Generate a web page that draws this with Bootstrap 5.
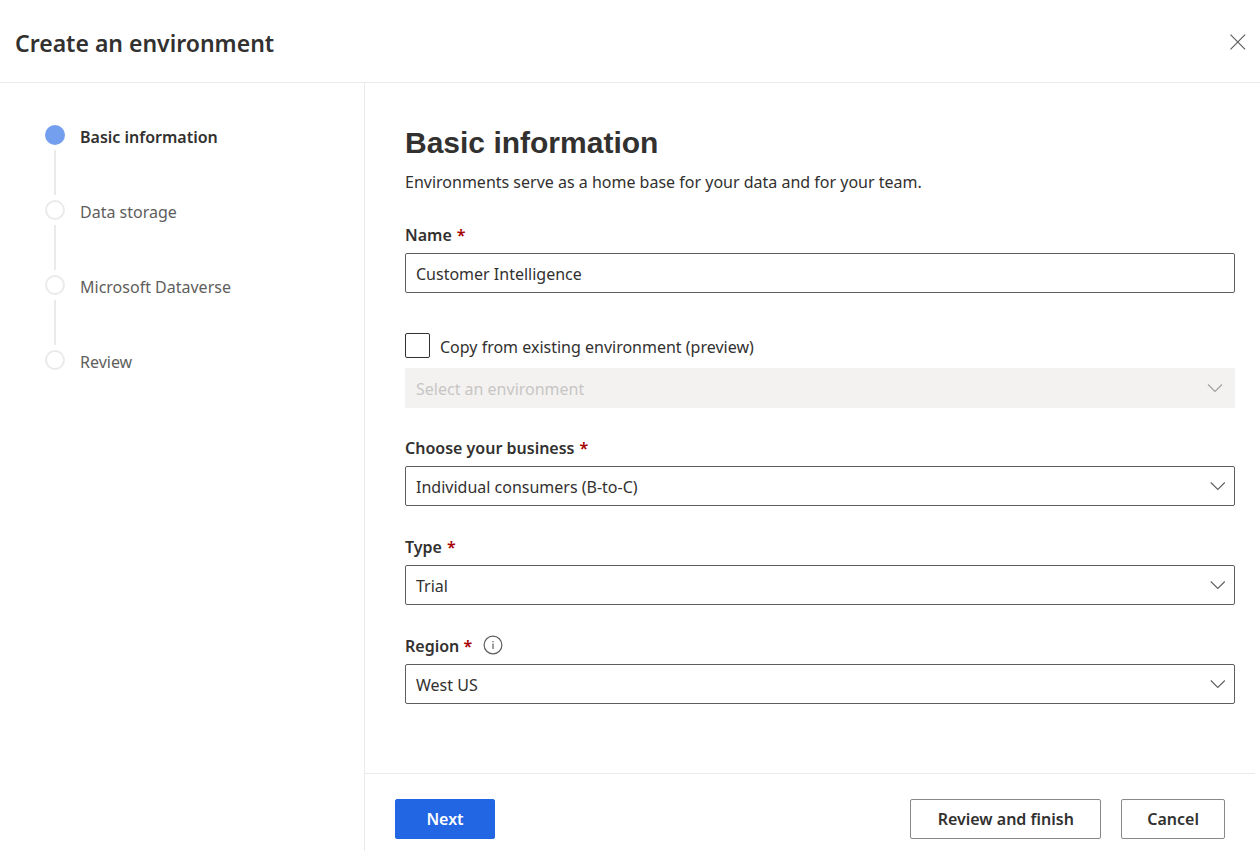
<!DOCTYPE html>
<html lang="en">
<head>
<meta charset="utf-8">
<meta name="viewport" content="width=device-width, initial-scale=1">
<title>Create an environment</title>
<link href="https://cdn.jsdelivr.net/npm/bootstrap@5.3.0/dist/css/bootstrap.min.css" rel="stylesheet">
<style>
  body { font-family: "Noto Sans", "Open Sans", sans-serif; font-size: 16px; line-height: 24px; color: #323130; background: #fff; }
  .panel-header { height: 83px; padding: 2px 14px 0 15px; border-bottom: 1px solid #eaeaea; }
  .panel-title { font-size: 23px; line-height: 32px; font-weight: 600; padding-top: 2px; }
  .close-btn { width: 16px; height: 16px; line-height: 0; }
  .steps-pane { flex: 0 0 365px; border-right: 1px solid #eaeaea; padding: 42px 20px 0 45px; }
  .step { height: 75px; gap: 15px; color: #605e5c; }
  .step a { color: inherit; }
  .step-track { width: 20px; gap: 5px; }
  .step-dot { width: 20px; height: 20px; border: 2px solid #eaeaea; border-radius: 50%; }
  .step-line { width: 2px; height: 45px; background: #eaeaea; }
  .step.current { color: #323130; font-weight: 600; }
  .step.current .step-dot { background: #749eee; border-color: #749eee; }
  .form-pane { padding: 40px 25px 40px 40px; }
  .form-heading { font-family: "Liberation Sans", Arial, sans-serif; font-size: 30px; line-height: 40px; font-weight: 700; margin-bottom: 7px; }
  .field { margin-bottom: 29px; }
  .field-copy { margin-bottom: 28px; }
  .field-label { display: flex; align-items: center; font-weight: 600; margin-bottom: 6px; }
  .req { color: #a80000; margin-left: 5px; }
  .info-btn { width: 20px; height: 20px; line-height: 0; margin: 0 0 3px 11px; }
  .form-control, .form-select { height: 40px; font-size: 16px; line-height: 24px; color: #323130; border: 1px solid #605e5c; border-radius: 2px; padding: 2px 10px 0; background-color: #fff; }
  .form-select { background-image: url("data:image/svg+xml,%3Csvg xmlns='http://www.w3.org/2000/svg' viewBox='0 0 16 16'%3E%3Cpath d='M.8 4.5l7 7 7-7' fill='none' stroke='%23605e5c' stroke-width='1.1'/%3E%3C/svg%3E"); background-size: 16px 16px; background-position: right 8px center; padding-right: 36px; }
  .form-select:disabled { background-color: #f3f2f1; border-color: #f3f2f1; color: #c8c6c4; opacity: 1; background-position: right 11px center; background-image: url("data:image/svg+xml,%3Csvg xmlns='http://www.w3.org/2000/svg' viewBox='0 0 16 16'%3E%3Cpath d='M1 4.5l7 7 7-7' fill='none' stroke='%23a19f9d' stroke-width='1.1'/%3E%3C/svg%3E"); }
  .copy-check { gap: 10px; margin: 40px 0 10px; height: 25px; }
  .copy-check label { padding-top: 2px; }
  .copy-check .form-check-input { width: 25px; height: 25px; border: 1px solid #323130; border-radius: 2px; margin: 0; flex: none; }
  .panel-footer { border-top: 1px solid #eaeaea; margin-right: 5px; padding: 25px 30px 12px; gap: 20px; }
  .panel-footer .btn { height: 40px; font-size: 16px; line-height: 24px; font-weight: 600; border-radius: 2px; padding: 0 25px; color: #323130; border: 1px solid #8a8886; background: #fff; }
  .panel-footer .btn-next { width: 100px; background: #2266e3; border-color: #2266e3; color: #fff; }
  .panel-footer .btn-review { min-width: 191px; }
</style>
</head>
<body>
<div class="d-flex flex-column min-vh-100">
  <header class="panel-header d-flex align-items-center justify-content-between">
    <h1 class="panel-title m-0">Create an environment</h1>
    <button type="button" class="close-btn border-0 bg-transparent p-0" aria-label="Close">
      <svg width="16" height="16" viewBox="0 0 16 16" fill="none" stroke="#605e5c" stroke-width="1.2"><path d="M.5.7l14.6 14.6M15.1.7L.5 15.3"/></svg>
    </button>
  </header>
  <div class="d-flex flex-grow-1">
    <nav class="steps-pane" aria-label="Steps">
      <ol class="list-unstyled m-0">
        <li class="step current d-flex"><span class="step-track d-flex flex-column align-items-center"><span class="step-dot"></span><span class="step-line"></span></span><a class="text-decoration-none" href="#" aria-current="step">Basic information</a></li>
        <li class="step d-flex"><span class="step-track d-flex flex-column align-items-center"><span class="step-dot"></span><span class="step-line"></span></span><a class="text-decoration-none" href="#">Data storage</a></li>
        <li class="step d-flex"><span class="step-track d-flex flex-column align-items-center"><span class="step-dot"></span><span class="step-line"></span></span><a class="text-decoration-none" href="#">Microsoft Dataverse</a></li>
        <li class="step d-flex"><span class="step-track d-flex flex-column align-items-center"><span class="step-dot"></span></span><a class="text-decoration-none" href="#">Review</a></li>
      </ol>
    </nav>
    <form class="d-flex flex-column flex-grow-1">
      <div class="form-pane flex-grow-1">
        <h2 class="form-heading">Basic information</h2>
        <p class="field">Environments serve as a home base for your data and for your team.</p>
        <label class="field-label" for="name">Name <span class="req">*</span></label>
        <input class="form-control" id="name" type="text" value="Customer Intelligence">
        <div class="copy-check d-flex align-items-center">
          <input class="form-check-input" type="checkbox" id="copy">
          <label for="copy">Copy from existing environment (preview)</label>
        </div>
        <select class="form-select field-copy" aria-label="Environment to copy" disabled><option>Select an environment</option></select>
        <label class="field-label" for="business">Choose your business <span class="req">*</span></label>
        <select class="form-select field" id="business"><option>Individual consumers (B-to-C)</option></select>
        <label class="field-label" for="type">Type <span class="req">*</span></label>
        <select class="form-select field" id="type"><option>Trial</option></select>
        <div class="field-label">
          <label for="region">Region <span class="req m-0">*</span></label>
          <button type="button" class="info-btn border-0 bg-transparent p-0" aria-label="About regions">
            <svg width="20" height="20" viewBox="0 0 20 20" fill="none" stroke="#605e5c" stroke-width="1.2"><circle cx="10" cy="10" r="8.9"/><path d="M10 8.5v5.5M10 6v1.3"/></svg>
          </button>
        </div>
        <select class="form-select" id="region"><option>West US</option></select>
      </div>
      <footer class="panel-footer d-flex">
        <button type="submit" class="btn btn-next me-auto">Next</button>
        <button type="button" class="btn btn-review">Review and finish</button>
        <button type="button" class="btn">Cancel</button>
      </footer>
    </form>
  </div>
</div>
<script src="https://cdn.jsdelivr.net/npm/bootstrap@5.3.0/dist/js/bootstrap.bundle.min.js"></script>
</body>
</html>
